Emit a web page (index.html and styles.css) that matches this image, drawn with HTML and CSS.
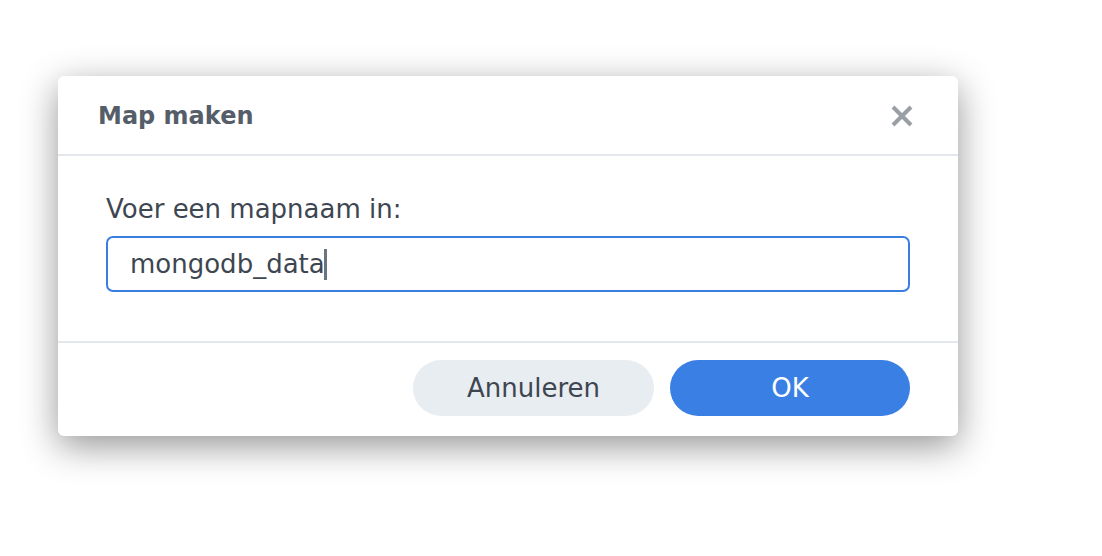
FILE: index.html
```html
<!DOCTYPE html>
<html lang="nl">
<head>
<meta charset="utf-8">
<title>Map maken</title>
<link rel="stylesheet" href="styles.css">
</head>
<body>
<div class="stage">
  <div class="dialog">
    <div class="dialog-header">
      <div class="dialog-title">Map maken</div>
      <div class="dialog-close" aria-label="Sluiten">
        <svg width="22" height="22" viewBox="0 0 22 22">
          <path d="M2 2 L20 20 M20 2 L2 20" stroke="#9a9fa5" stroke-width="4" fill="none"/>
        </svg>
      </div>
    </div>
    <div class="dialog-body">
      <div class="field-label">Voer een mapnaam in:</div>
      <div class="text-input"><span class="value">mongodb_data</span><span class="caret"></span></div>
    </div>
    <div class="dialog-footer">
      <button class="btn btn-secondary">Annuleren</button>
      <button class="btn btn-primary">OK</button>
    </div>
  </div>
</div>
</body>
</html>
```

FILE: styles.css
```css
html, body {
  margin: 0;
  padding: 0;
  background: #ffffff;
}

body {
  font-family: "DejaVu Sans", Verdana, sans-serif;
  min-height: 556px;
}

.stage {
  padding: 76px 0 120px 58px;
}

.dialog {
  width: 900px;
  height: 360px;
  background: #ffffff;
  border-radius: 6px;
  box-shadow: 0 10px 36px rgba(0, 0, 0, 0.42);
  display: flex;
  flex-direction: column;
  box-sizing: border-box;
}

.dialog-header {
  height: 80px;
  flex: none;
  display: flex;
  align-items: center;
  justify-content: space-between;
  padding: 1px 45px 0 40px;
  box-sizing: border-box;
  border-bottom: 2px solid #e4e8ee;
}

.dialog-title {
  font-size: 24px;
  font-weight: bold;
  color: #555d69;
}

.dialog-close {
  width: 22px;
  height: 22px;
  display: flex;
}

.dialog-body {
  flex: none;
  height: 185px;
  box-sizing: border-box;
  padding: 37px 48px 0 48px;
}

.field-label {
  font-size: 26px;
  line-height: 32px;
  color: #3e4651;
  margin-bottom: 11px;
}

.text-input {
  height: 56px;
  box-sizing: border-box;
  border: 2px solid #3a7fe0;
  border-radius: 7px;
  padding: 0 22px;
  display: flex;
  align-items: center;
  font-size: 26px;
  color: #3e4651;
}

.caret {
  display: inline-block;
  width: 3px;
  height: 31px;
  background: #6b737d;
  margin-left: -1px;
}

.dialog-footer {
  flex: 1;
  border-top: 2px solid #e4e8ee;
  display: flex;
  justify-content: flex-end;
  align-items: flex-start;
  gap: 16px;
  padding: 17px 48px 0 0;
}

.btn {
  width: 241px;
  height: 56px;
  border: none;
  border-radius: 28px;
  font-family: "DejaVu Sans", Verdana, sans-serif;
  font-size: 26px;
  padding: 0;
  cursor: pointer;
}

.btn-secondary {
  background: #e8edf2;
  color: #3e4651;
}

.btn-primary {
  width: 240px;
  background: #3a7fe3;
  color: #ffffff;
}
```
